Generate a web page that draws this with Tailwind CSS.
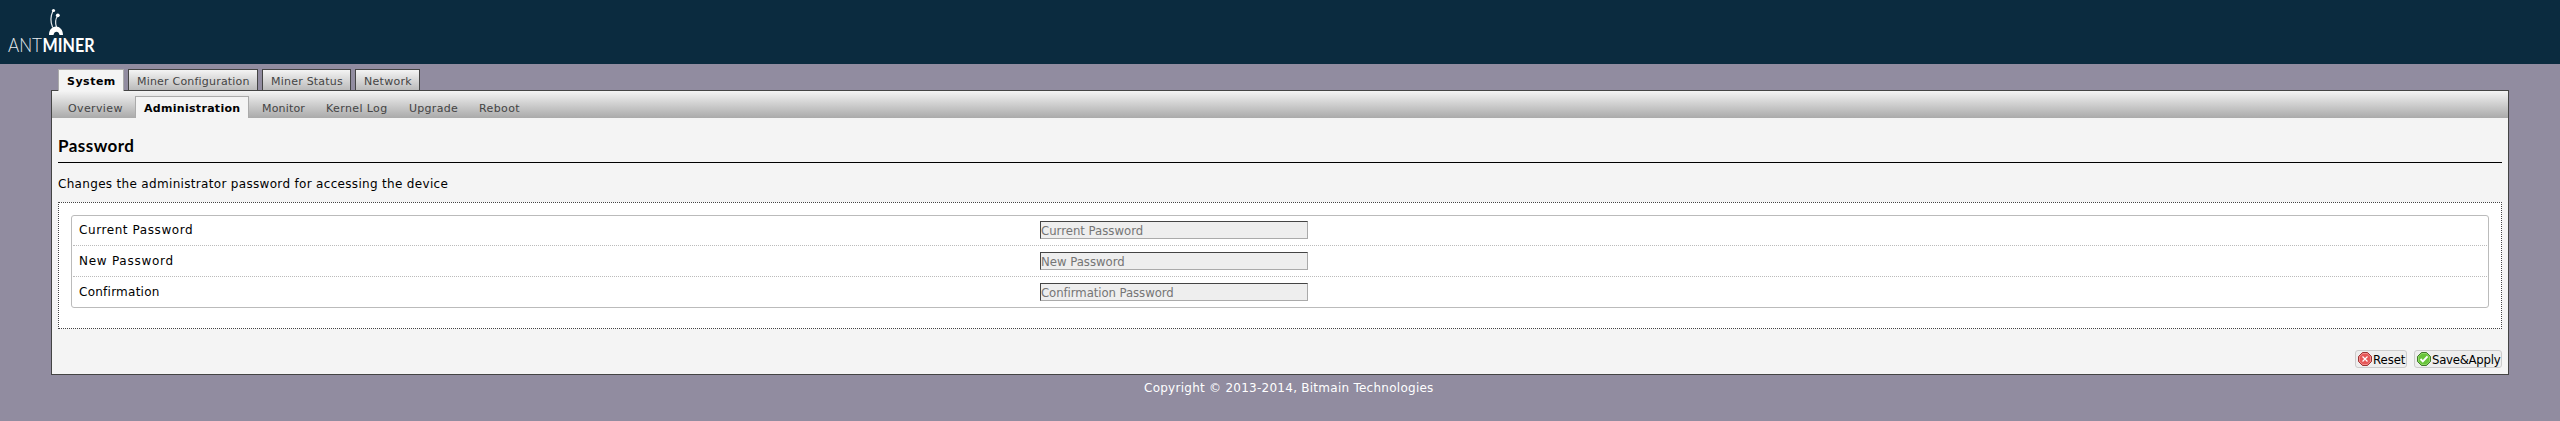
<!DOCTYPE html>
<html lang="en">
<head>
<meta charset="utf-8">
<title>Antminer</title>
<script src="https://cdn.jsdelivr.net/npm/@tailwindcss/browser@4"></script>
</head>
<body class="h-[421px] overflow-hidden bg-[#918ca0] font-['DejaVu_Sans',sans-serif] text-[12px] leading-[16px] text-black">
<header class="h-16 bg-[#0b2b3f] pl-2 pt-2">
<svg class="block overflow-visible" width="90" height="52" viewBox="0 0 90 52">
<g fill="none" stroke="#e4e9ec" stroke-linecap="round">
<path d="M44.5 19C42.5 14 42.5 8 45 3" stroke-width="1.2"/>
<path d="M48.5 19C47 15 47.5 11 49.5 8" stroke-width="1.2"/>
</g>
<circle cx="45.5" cy="2.5" r="1.6" fill="#fff"/><circle cx="49.8" cy="7.3" r="1.9" fill="#fff"/>
<path d="M41 27C41 15.500 55 15.500 55 27H51.500C51 22.500 46 22.500 45.500 27Z" fill="#fff"/>
<text x="0" y="44" textLength="34" lengthAdjust="spacingAndGlyphs" fill="#e8edf0" font-family="Lato, sans-serif" font-size="19" font-weight="300">ANT</text>
<text x="34.500" y="44" textLength="52" lengthAdjust="spacingAndGlyphs" fill="#fff" font-family="Lato, sans-serif" font-size="19" font-weight="700">MINER</text>
</svg>
</header>
<div class="ml-[51px] w-[2458px]">
<nav class="relative z-10 flex h-[27px] gap-1 pl-[7px] pt-[5px] text-[11px] leading-[23px] whitespace-nowrap text-[#444]">
<a class="h-[22px] w-[66px] border border-b-0 border-[#aaa] bg-[#f4f4f4] pl-2 font-bold tracking-[0.5px] text-black">System</a>
<a class="h-[21px] w-[130px] border border-b-0 border-[#444] bg-linear-to-b from-[#f4f4f4] to-[#bbb] pl-2 tracking-[0.2px]">Miner Configuration</a>
<a class="h-[21px] w-[89px] border border-b-0 border-[#444] bg-linear-to-b from-[#f4f4f4] to-[#bbb] pl-2 tracking-[0.22px]">Miner Status</a>
<a class="h-[21px] w-[65px] border border-b-0 border-[#444] bg-linear-to-b from-[#f4f4f4] to-[#bbb] pl-2 tracking-[0.3px]">Network</a>
</nav>
<main class="-mt-px h-[285px] border border-[#444] bg-[#f4f4f4]">
<nav class="flex h-[27px] items-end bg-linear-to-b from-[#f4f4f4] to-[#aaa] pl-4 text-[11px] leading-[23px] whitespace-nowrap text-[#444]">
<a class="h-[22px] w-[67px] pt-px tracking-[0.37px]">Overview</a>
<a class="h-[22px] w-[114px] border border-b-0 border-[#aaa] bg-[#f4f4f4] pl-2 font-bold tracking-[0.3px] text-black">Administration</a>
<a class="ml-[13px] h-[22px] w-16 pt-px tracking-[0.17px]">Monitor</a>
<a class="h-[22px] w-[83px] pt-px tracking-[0.38px]">Kernel Log</a>
<a class="h-[22px] w-[70px] pt-px tracking-[0.28px]">Upgrade</a>
<a class="h-[22px] pt-px tracking-[0.38px]">Reboot</a>
</nav>
<div class="px-[6px]">
<h2 class="h-[45px] border-b border-black pt-[17px] font-['Lato',sans-serif] text-[17px] leading-[22px] font-bold tracking-[0.45px]">Password</h2>
<p class="h-[39px] pt-[13px] tracking-[0.32px]">Changes the administrator password for accessing the device</p>
<section class="h-[127px] border border-dotted border-[#444] bg-white px-3 pt-3">
<div class="h-[93px] rounded-[3px] border border-[#bbb] px-px">
<div class="flex h-[30px] border-b border-dotted border-[#bbb]">
<label class="w-[967px] pl-[6px] pt-[6px] tracking-[0.58px]">Current Password</label>
<input type="password" placeholder="Current Password" class="mt-[5px] h-[18px] w-[268px] border border-t-[#444] border-r-[#aaa] border-b-[#aaa] border-l-[#444] bg-[#eee] text-[13px] leading-[16px] font-stretch-semi-condensed placeholder:text-[#757575]">
</div>
<div class="flex h-[31px] border-b border-dotted border-[#bbb]">
<label class="w-[967px] pl-[6px] pt-[7px] tracking-[0.73px]">New Password</label>
<input type="password" placeholder="New Password" class="mt-[6px] h-[18px] w-[268px] border border-t-[#444] border-r-[#aaa] border-b-[#aaa] border-l-[#444] bg-[#eee] text-[13px] leading-[16px] font-stretch-semi-condensed placeholder:text-[#757575]">
</div>
<div class="flex h-[30px]">
<label class="w-[967px] pl-[6px] pt-[7px] tracking-[0.25px]">Confirmation</label>
<input type="password" placeholder="Confirmation Password" class="mt-[6px] h-[18px] w-[268px] border border-t-[#444] border-r-[#aaa] border-b-[#aaa] border-l-[#444] bg-[#eee] text-[13px] leading-[16px] font-stretch-semi-condensed tracking-[-0.06px] placeholder:text-[#757575]">
</div>
</div>
</section>
<div class="mt-[21px] flex justify-end gap-[7px] text-[13px] leading-[16px] font-stretch-semi-condensed whitespace-nowrap">
<button class="flex h-[18px] w-[52px] items-center rounded-[3px] border border-[#ccc] bg-[#eee] pl-[2px]">
<svg class="mr-px shrink-0" width="14" height="14" viewBox="0 0 14 14"><path d="M4.500 .5h5l4 4v5l-4 4h-5l-4-4v-5z" fill="#e65757" stroke="#9c3434"/><path d="M4.700 1.500h4.600l3.200 3.200v4.600l-3.200 3.200H4.700l-3.200-3.200V4.700z" fill="none" stroke="#f59b9b" stroke-width=".8"/><path d="M4.500 4.500l5 5M9.500 4.500l-5 5" stroke="#fff" stroke-width="1.2"/></svg><span class="pt-px tracking-[-0.05px]">Reset</span>
</button>
<button class="flex h-[18px] w-[88px] items-center rounded-[3px] border border-[#ccc] bg-[#eee] pl-[2px]">
<svg class="mr-px shrink-0" width="14" height="14" viewBox="0 0 14 14"><path d="M4.500 .5h5l4 4v5l-4 4h-5l-4-4v-5z" fill="#68c43a" stroke="#42782c"/><path d="M4.700 1.500h4.600l3.200 3.200v4.600l-3.200 3.200H4.700l-3.200-3.200V4.700z" fill="none" stroke="#9bdd72" stroke-width=".8"/><path d="M3.500 7l2.300 2.300L10.500 4.300" fill="none" stroke="#fff" stroke-width="1.900"/></svg><span class="pt-px tracking-[-0.25px]">Save&amp;Apply</span>
</button>
</div>
</div>
</main>
</div>
<footer class="ml-[1144px] pt-[5px] tracking-[0.26px] whitespace-nowrap text-white">Copyright © 2013-2014, Bitmain Technologies</footer>
</body>
</html>
